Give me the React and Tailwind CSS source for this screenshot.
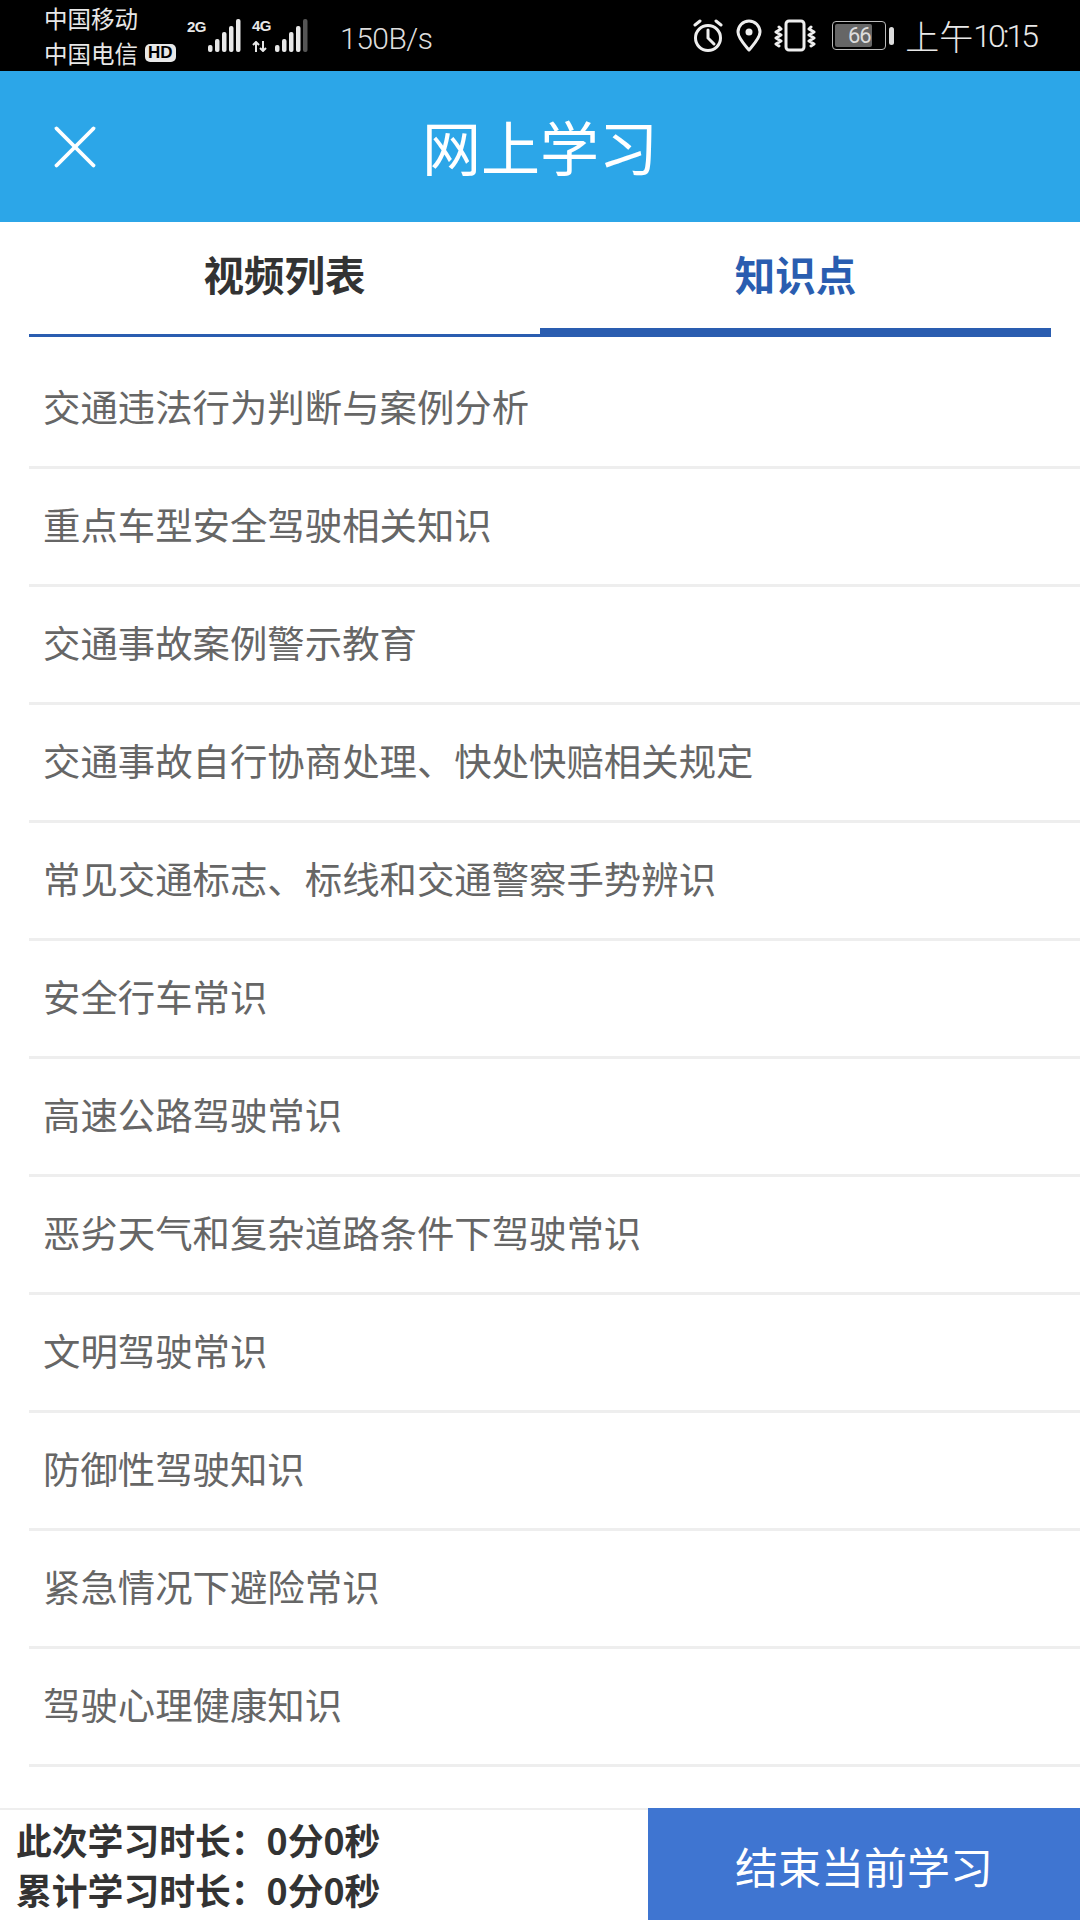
import { X } from 'lucide-react';

const topics = [
  '交通违法行为判断与案例分析',
  '重点车型安全驾驶相关知识',
  '交通事故案例警示教育',
  '交通事故自行协商处理、快处快赔相关规定',
  '常见交通标志、标线和交通警察手势辨识',
  '安全行车常识',
  '高速公路驾驶常识',
  '恶劣天气和复杂道路条件下驾驶常识',
  '文明驾驶常识',
  '防御性驾驶知识',
  '紧急情况下避险常识',
  '驾驶心理健康知识',
];

const cjk = "font-['Noto_Sans_CJK_SC','Noto_Sans',sans-serif]";

// signal bars, dim = last bar greyed out
function Signal({ dim }) {
  const bars = [7, 13, 20, 26, 33];
  return (
    <svg width="35" height="33" viewBox="0 0 35 33">
      {bars.map((h, i) => (
        <rect
          key={i}
          x={i * 7 + 1}
          y={33 - h}
          width="4.5"
          height={h}
          rx="2"
          fill={dim && i === 4 ? '#555' : '#e8e8e8'}
        />
      ))}
    </svg>
  );
}

function Alarm() {
  return (
    <svg width="32" height="33" viewBox="0 0 32 33" fill="none" stroke="#eee" strokeWidth="3" strokeLinecap="round">
      <circle cx="16" cy="19" r="12.5" />
      <path d="M16 11v8l6 6" />
      <path d="M3 6l5-4M29 6l-5-4" />
    </svg>
  );
}

function Pin() {
  return (
    <svg width="26" height="33" viewBox="0 0 26 33" fill="none" stroke="#eee" strokeWidth="3">
      <path d="M13 31C8 25 2 19 2 13a11 11 0 0 1 22 0c0 6-6 12-11 18z" strokeLinejoin="round" />
      <circle cx="13" cy="13" r="3.5" fill="#eee" stroke="none" />
    </svg>
  );
}

function Vibrate() {
  return (
    <svg width="42" height="33" viewBox="0 0 42 33" fill="none" stroke="#eee" strokeWidth="3" strokeLinecap="round" strokeLinejoin="round">
      <rect x="12" y="2" width="18" height="29" rx="3" />
      <path d="M5 8l2 2-5 3 5 3-5 3 5 3-5 3 3 2" />
      <path d="M37 8l-2 2 5 3-5 3 5 3-5 3 5 3-3 2" />
    </svg>
  );
}

function Battery() {
  return (
    <div className="flex items-center gap-[3px]">
      <div className="relative h-[29px] w-[54px] rounded-[4px] border border-[#bbb] p-[2px]">
        <div className="h-full w-[76%] rounded-[2px] bg-[#666]" />
        <span className="absolute inset-0 flex items-center justify-center font-['Roboto',sans-serif] text-[22px] leading-none tracking-[-1px] text-[#ddd]">
          66
        </span>
      </div>
      <div className="h-[18px] w-[5px] rounded-full bg-[#ddd]" />
    </div>
  );
}

function StatusBar() {
  return (
    <div className={`flex h-[71px] items-center bg-black text-[#e8e8e8] ${cjk}`}>
      <div className="ml-[44px] flex w-[143px] flex-col text-[23.5px] leading-[35px]">
        <span>中国移动</span>
        <span className="flex items-center gap-[7px]">
          中国电信
          <span className="rounded-[5px] bg-[#e8e8e8] px-[3px] font-['Liberation_Sans',sans-serif] text-[17px] leading-[18px] font-bold text-black">
            HD
          </span>
        </span>
      </div>
      <div className="flex w-[64px] items-start">
        <span className="mr-[1px] font-['Liberation_Sans',sans-serif] text-[15px] leading-[16px] font-bold tracking-[-0.5px]">2G</span>
        <Signal />
      </div>
      <div className="ml-[1px] flex w-[88px] items-start">
        <div className="mr-[3px] flex flex-col gap-[8px]">
          <span className="font-['Liberation_Sans',sans-serif] text-[15px] leading-[14px] font-bold tracking-[-0.5px]">4G</span>
          <svg width="15" height="11" viewBox="0 0 15 11" fill="none" stroke="#e8e8e8" strokeWidth="2">
            <path d="M4 11V2M1 4l3-3 3 3M11 0v9M8 7l3 3 3-3" />
          </svg>
        </div>
        <Signal dim />
      </div>
      <span className="pt-[5px] font-['Roboto',sans-serif] text-[30px] font-light tracking-[-0.5px] text-[#ddd]">150B/s</span>

      <div className="ml-auto flex items-center">
        <Alarm />
        <div className="ml-[12px]">
          <Pin />
        </div>
        <div className="ml-[12px]">
          <Vibrate />
        </div>
        <div className="ml-[16px]">
          <Battery />
        </div>
        <span className="mr-[44px] ml-[11px] flex items-center text-[34px] leading-none font-light">
          上午
          <span className="font-['Roboto',sans-serif] text-[32px] font-light tracking-[-3px]">10:15</span>
        </span>
      </div>
    </div>
  );
}

export default function App() {
  return (
    <div className={`flex h-[1920px] w-[1080px] flex-col overflow-hidden bg-white ${cjk}`}>
      <StatusBar />

      {/* 标题栏 */}
      <div className="grid h-[151px] grid-cols-[1fr_auto_1fr] items-center bg-[#2ca6e8] text-white">
        <div className="pl-[38px]">
          <X size={74} strokeWidth={1.25} />
        </div>
        <h1 className="pb-[2px] text-[59px] leading-none font-normal">网上学习</h1>
        <div />
      </div>

      {/* 选项卡 */}
      <div className="mx-[29px] flex h-[115px] shrink-0">
        <div className="flex flex-1 items-center justify-center border-b-[3px] border-[#2a5db0] pb-[8px] text-[40.5px] font-bold text-[#333]">
          视频列表
        </div>
        <div className="flex flex-1 items-center justify-center border-b-[9px] border-[#2a5db0] pb-[1px] text-[40.5px] font-bold text-[#2a5db0]">
          知识点
        </div>
      </div>

      {/* 知识点列表 */}
      <div className="mt-[14px] min-h-0 flex-1">
        {topics.map((t) => (
          <div
            key={t}
            className="ml-[29px] flex h-[118px] items-center border-b-[3px] border-[#eeeeee] pb-[5px] pl-[14px] text-[37.4px] text-[#666]"
          >
            {t}
          </div>
        ))}
      </div>

      {/* 底部 */}
      <div className="flex h-[112px] shrink-0">
        <div className="flex flex-1 flex-col justify-center border-t-2 border-[#eeeeee] pb-[2px] pl-[16px] text-[35.8px] leading-[50px] font-bold text-[#333]">
          <span>此次学习时长：0分0秒</span>
          <span>累计学习时长：0分0秒</span>
        </div>
        <div className="flex w-[432px] items-center justify-center bg-[#3f75d1] pt-[3px] text-[43px] text-white">
          结束当前学习
        </div>
      </div>
    </div>
  );
}
